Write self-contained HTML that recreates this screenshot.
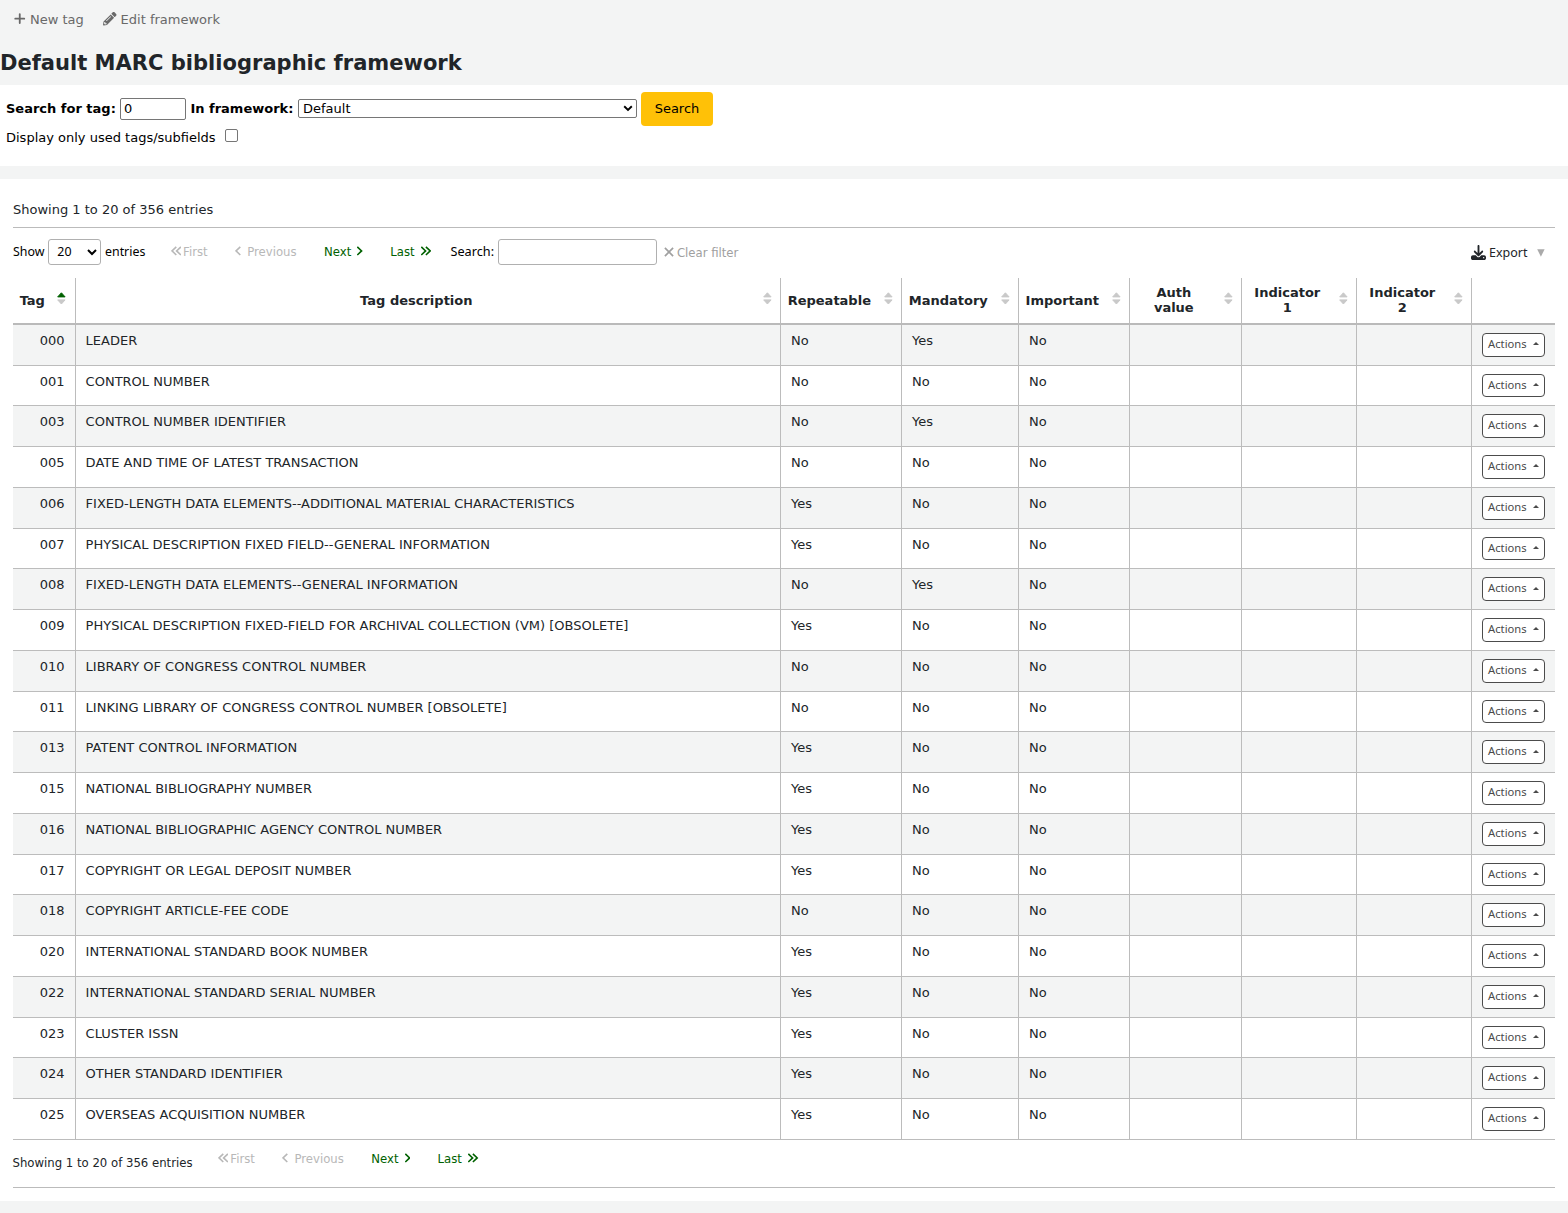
<!DOCTYPE html>
<html lang="en">
<head>
<meta charset="utf-8">
<title>Default MARC bibliographic framework</title>
<style>
*{box-sizing:border-box;}
html,body{margin:0;padding:0;}
body{width:1568px;height:1213px;overflow:hidden;background:#f3f4f4;color:#212529;font-family:"DejaVu Sans","Liberation Sans",sans-serif;font-size:13px;line-height:1.5;position:relative;}
a{text-decoration:none;color:inherit;}
.ns0{font-family:"Noto Sans","Noto Sans CJK SC","Liberation Sans",sans-serif;line-height:0;}
#toolbar{position:absolute;left:0;top:0;height:40px;width:100%;}
#toolbar .tb{position:absolute;top:10px;color:#696969;font-size:13px;line-height:20px;white-space:nowrap;}
#toolbar svg{position:absolute;}
h1{position:absolute;left:0;top:46px;margin:0;font-size:21.040px;font-weight:bold;line-height:34px;color:#212529;white-space:nowrap;}
#form{position:absolute;left:0;top:85px;width:1568px;height:81px;background:#fff;}
#form label{position:absolute;white-space:nowrap;font-size:13px;line-height:20px;color:#000;}
#form label.b{font-weight:bold;}
#tagbox{position:absolute;left:120px;top:13px;width:66px;height:22px;border:1px solid #767676;border-radius:2px;background:#fff;font-size:13px;line-height:20px;padding-left:3px;color:#000;}
#fwsel{position:absolute;left:298px;top:14px;width:339px;height:19px;border:1px solid #767676;border-radius:2px;background:#fff;font-size:13px;line-height:17px;padding-left:4px;color:#000;}
#fwsel svg{position:absolute;right:3px;top:5px;}
#searchbtn{position:absolute;left:641px;top:7px;width:72px;height:34px;background:#ffc107;border-radius:4px;font-size:13px;line-height:34px;text-align:center;color:#000;}
#cb{position:absolute;left:225px;top:44px;width:13px;height:13px;border:1px solid #767676;border-radius:2px;background:#fff;}
#section{position:absolute;left:0;top:179px;width:1568px;height:1022px;background:#fff;}
.abs{position:absolute;white-space:nowrap;}
.hr{position:absolute;left:13px;width:1542px;height:1px;background:#bbbbbb;}
#info-top{left:13px;top:21px;font-size:13px;line-height:20px;}
.pg{font-size:11.7px;line-height:18px;}
.pg.dis{color:#b8b8b8;}
.pg.on{color:#006100;}
.ctl{font-size:12.4px;line-height:18px;color:#000;}
#lensel{position:absolute;left:48px;top:60px;width:53px;height:26px;border:1px solid #b0b0b0;border-radius:3px;background:#fff;}
#lensel>span{position:absolute;left:8.300px;top:3px;font-size:12.400px;line-height:18px;color:#000;}
#lensel svg{position:absolute;right:3.500px;top:9px;}
#filter{position:absolute;left:498px;top:60px;width:159px;height:26px;border:1px solid #b0b0b0;border-radius:3px;background:#fff;}
table#tbl{position:absolute;left:13px;top:99px;width:1542px;border-collapse:separate;border-spacing:0;table-layout:fixed;}
#tbl th{height:46.750px;padding:0 29.700px 0 6.300px;border-right:1px solid #bcbcbc;border-bottom:2px solid #bababa;font-weight:bold;font-size:13px;line-height:15px;text-align:center;vertical-align:middle;position:relative;background:#fff;}
#tbl th.two{padding-bottom:0.750px;}
#tbl th:last-child,#tbl td:last-child{border-right:0;}
#tbl td{height:40.750px;padding:6.100px 10px 0 10px;border-right:1px solid #bcbcbc;border-bottom:1px solid #bcbcbc;font-size:13px;line-height:19.5px;vertical-align:top;white-space:nowrap;overflow:hidden;}
#tbl tr.odd td{background:#f3f4f4;}
#tbl tr.even td{background:#fff;}
#tbl td.tag{text-align:right;padding-right:10.500px;}
#tbl td.desc{padding-left:9.600px;}
#tbl td.act{padding:8px 0 0 10px;}
.btn-act{display:block;width:63px;height:23.750px;border:1px solid #4c4c4c;border-radius:4px;background:#fff;color:#4a4a4a;font-family:"Noto Sans","Noto Sans CJK SC","Liberation Sans",sans-serif;font-size:11.2px;line-height:19.400px;padding-left:5.100px;position:relative;}
.caret{display:inline-block;width:0;height:0;margin-left:3.500px;vertical-align:2.700px;border-left:3px solid transparent;border-right:3px solid transparent;border-bottom:3.500px solid #4a4a4a;}
.sort{position:absolute;right:8.300px;top:14.200px;width:9px;height:13px;}
</style>
</head>
<body>
<div id="toolbar">
  <svg style="left:14px;top:13px" width="12" height="12" viewBox="0 0 12 12"><path d="M5.750 1.100V10.100M1.250 5.650H10.250" stroke="#696969" stroke-width="1.800" stroke-linecap="round" fill="none"/></svg>
  <a class="tb" style="left:30px">New tag</a>
  <svg style="left:103px;top:12.400px" width="13.500" height="13.500" viewBox="0 0 512 512"><path fill="#696969" d="M497.900 142.100l-46.100 46.100c-4.700 4.700-12.300 4.700-17 0l-111-111c-4.700-4.700-4.700-12.300 0-17l46.100-46.100c18.700-18.700 49.100-18.700 67.900 0l60.100 60.100c18.800 18.700 18.800 49.100 0 67.900zM284.200 99.800L21.600 362.400.4 483.900c-2.900 16.400 11.400 30.600 27.800 27.800l121.500-21.300 262.600-262.600c4.700-4.700 4.700-12.300 0-17l-111-111c-4.800-4.700-12.400-4.700-17.100 0zM124.100 339.900c-5.500-5.500-5.500-14.300 0-19.800l154-154c5.500-5.500 14.300-5.500 19.800 0s5.500 14.300 0 19.800l-154 154c-5.500 5.500-14.300 5.500-19.800 0zM88 424h48v36.300l-64.500 11.300-31.100-31.100L51.700 376H88v48z"/></svg>
  <a class="tb" style="left:120.600px">Edit framework</a>
</div>
<h1>Default MARC bibliographic framework</h1>
<div id="form">
  <label class="b" style="left:6px;top:14px">Search for tag:</label>
  <div id="tagbox">0</div>
  <label class="b" style="left:190.400px;top:14px">In framework:</label>
  <div id="fwsel">Default<svg width="10" height="7" viewBox="0 0 10 7"><path d="M1.200 1.300L5 5L8.800 1.300" stroke="#000" stroke-width="1.900" fill="none"/></svg></div>
  <div id="searchbtn">Search</div>
  <label style="left:6px;top:43px">Display only used tags/subfields</label>
  <div id="cb"></div>
</div>
<div id="section">
  <div id="info-top" class="abs">Showing 1 to 20 of 356 entries</div>
  <div class="hr" style="top:48px"></div>
  <span class="abs ctl" style="left:13px;top:64px"><span class="ns0">Show</span></span>
  <div id="lensel"><span><span class="ns0">20</span></span><svg width="10" height="7" viewBox="0 0 10 7"><path d="M1 1L5 5L9 1" stroke="#000" stroke-width="2" fill="none"/></svg></div>
  <span class="abs ctl" style="left:105px;top:64px"><span class="ns0">entries</span></span>
  <svg class="abs" style="left:171.1px;top:67.4px" width="10.2" height="10" viewBox="0 0 10.2 10"><path d="M5.300 0.900L1 4.950L5.300 9 M9.900 0.900L5.600 4.950L9.900 9" stroke="#b8b8b8" stroke-width="1.600" fill="none"/></svg>
  <span class="abs pg dis" style="left:183.1px;top:64px">First</span>
  <svg class="abs" style="left:235.2px;top:67.4px" width="5.6" height="10" viewBox="0 0 5.6 10"><path d="M5.300 0.900L1 4.950L5.300 9" stroke="#b8b8b8" stroke-width="1.600" fill="none"/></svg>
  <span class="abs pg dis" style="left:247.2px;top:64px">Previous</span>
  <span class="abs pg on" style="left:324.1px;top:64px">Next</span>
  <svg class="abs" style="left:357.3px;top:67.4px" width="5.6" height="10" viewBox="0 0 5.6 10"><path d="M0.300 0.900L4.600 4.950L0.300 9" stroke="#006100" stroke-width="1.600" fill="none"/></svg>
  <span class="abs pg on" style="left:390.3px;top:64px">Last</span>
  <svg class="abs" style="left:421.2px;top:67.4px" width="10.2" height="10" viewBox="0 0 10.2 10"><path d="M0.300 0.900L4.600 4.950L0.300 9 M4.900 0.900L9.200 4.950L4.900 9" stroke="#006100" stroke-width="1.600" fill="none"/></svg>
  <span class="abs ctl" style="left:450.500px;top:64px;font-size:12.700px"><span class="ns0">Search:</span></span>
  <div id="filter"></div>
  <svg class="abs" style="left:663.500px;top:68.200px" width="10" height="10" viewBox="0 0 10 10"><path d="M0.900 0.900L9.100 9.100M9.100 0.900L0.900 9.100" stroke="#a0a0a0" stroke-width="1.700" fill="none"/></svg>
  <span class="abs pg dis" style="left:676.900px;top:65px;color:#a0a0a0">Clear filter</span>
  <svg class="abs" style="left:1471px;top:65.800px" width="15" height="15" viewBox="0 0 512 512"><path fill="#212529" d="M288 32c0-17.700-14.300-32-32-32s-32 14.300-32 32V274.700l-73.400-73.400c-12.500-12.500-32.800-12.500-45.300 0s-12.500 32.800 0 45.300l128 128c12.500 12.500 32.800 12.500 45.300 0l128-128c12.500-12.500 12.500-32.800 0-45.300s-32.800-12.500-45.300 0L288 274.700V32zM64 352c-35.300 0-64 28.700-64 64v32c0 35.300 28.700 64 64 64H448c35.300 0 64-28.700 64-64V416c0-35.300-28.700-64-64-64H346.500l-45.300 45.300c-25 25-65.500 25-90.500 0L165.500 352H64zm368 56a24 24 0 1 1 0 48 24 24 0 1 1 0-48z"/></svg>
  <span class="abs ctl" style="left:1489px;top:65px;color:#212529;font-size:12.500px"><span class="ns0">Export</span></span>
  <svg class="abs" style="left:1537.200px;top:70px" width="8" height="8" viewBox="0 0 8 8"><path d="M0.200 0.200H7.600L3.900 7.700Z" fill="#aaaaaa"/></svg>
  <table id="tbl">
  <colgroup><col style="width:63px"><col style="width:705px"><col style="width:121px"><col style="width:117px"><col style="width:111px"><col style="width:112px"><col style="width:115px"><col style="width:115px"><col style="width:83px"></colgroup>
  <thead><tr>
  <th>Tag<svg class="sort" style="right:9.100px" width="9" height="13" viewBox="0 0 9 13"><path d="M0.700 4.900L4.400 0.800L8.100 4.900Z" fill="#006100" stroke="#006100" stroke-width="1" stroke-linejoin="round"/><path d="M0.700 7.900H8.100L4.400 12Z" fill="#c9c9c9" stroke="#c9c9c9" stroke-width="1" stroke-linejoin="round"/></svg></th><th>Tag description<svg class="sort" width="9" height="13" viewBox="0 0 9 13"><path d="M0.700 4.900L4.400 0.800L8.100 4.900Z" fill="#c9c9c9" stroke="#c9c9c9" stroke-width="1" stroke-linejoin="round"/><path d="M0.700 7.900H8.100L4.400 12Z" fill="#c9c9c9" stroke="#c9c9c9" stroke-width="1" stroke-linejoin="round"/></svg></th><th>Repeatable<svg class="sort" width="9" height="13" viewBox="0 0 9 13"><path d="M0.700 4.900L4.400 0.800L8.100 4.900Z" fill="#c9c9c9" stroke="#c9c9c9" stroke-width="1" stroke-linejoin="round"/><path d="M0.700 7.900H8.100L4.400 12Z" fill="#c9c9c9" stroke="#c9c9c9" stroke-width="1" stroke-linejoin="round"/></svg></th><th>Mandatory<svg class="sort" width="9" height="13" viewBox="0 0 9 13"><path d="M0.700 4.900L4.400 0.800L8.100 4.900Z" fill="#c9c9c9" stroke="#c9c9c9" stroke-width="1" stroke-linejoin="round"/><path d="M0.700 7.900H8.100L4.400 12Z" fill="#c9c9c9" stroke="#c9c9c9" stroke-width="1" stroke-linejoin="round"/></svg></th><th>Important<svg class="sort" width="9" height="13" viewBox="0 0 9 13"><path d="M0.700 4.900L4.400 0.800L8.100 4.900Z" fill="#c9c9c9" stroke="#c9c9c9" stroke-width="1" stroke-linejoin="round"/><path d="M0.700 7.900H8.100L4.400 12Z" fill="#c9c9c9" stroke="#c9c9c9" stroke-width="1" stroke-linejoin="round"/></svg></th><th class="two">Auth value<svg class="sort" width="9" height="13" viewBox="0 0 9 13"><path d="M0.700 4.900L4.400 0.800L8.100 4.900Z" fill="#c9c9c9" stroke="#c9c9c9" stroke-width="1" stroke-linejoin="round"/><path d="M0.700 7.900H8.100L4.400 12Z" fill="#c9c9c9" stroke="#c9c9c9" stroke-width="1" stroke-linejoin="round"/></svg></th><th class="two">Indicator 1<svg class="sort" width="9" height="13" viewBox="0 0 9 13"><path d="M0.700 4.900L4.400 0.800L8.100 4.900Z" fill="#c9c9c9" stroke="#c9c9c9" stroke-width="1" stroke-linejoin="round"/><path d="M0.700 7.900H8.100L4.400 12Z" fill="#c9c9c9" stroke="#c9c9c9" stroke-width="1" stroke-linejoin="round"/></svg></th><th class="two">Indicator 2<svg class="sort" width="9" height="13" viewBox="0 0 9 13"><path d="M0.700 4.900L4.400 0.800L8.100 4.900Z" fill="#c9c9c9" stroke="#c9c9c9" stroke-width="1" stroke-linejoin="round"/><path d="M0.700 7.900H8.100L4.400 12Z" fill="#c9c9c9" stroke="#c9c9c9" stroke-width="1" stroke-linejoin="round"/></svg></th><th></th>
  </tr></thead>
  <tbody>
<tr class="odd"><td class="tag">000</td><td class="desc">LEADER</td><td>No</td><td>Yes</td><td>No</td><td></td><td></td><td></td><td class="act"><a class="btn-act">Actions <span class="caret"></span></a></td></tr>
<tr class="even"><td class="tag">001</td><td class="desc">CONTROL NUMBER</td><td>No</td><td>No</td><td>No</td><td></td><td></td><td></td><td class="act"><a class="btn-act">Actions <span class="caret"></span></a></td></tr>
<tr class="odd"><td class="tag">003</td><td class="desc">CONTROL NUMBER IDENTIFIER</td><td>No</td><td>Yes</td><td>No</td><td></td><td></td><td></td><td class="act"><a class="btn-act">Actions <span class="caret"></span></a></td></tr>
<tr class="even"><td class="tag">005</td><td class="desc">DATE AND TIME OF LATEST TRANSACTION</td><td>No</td><td>No</td><td>No</td><td></td><td></td><td></td><td class="act"><a class="btn-act">Actions <span class="caret"></span></a></td></tr>
<tr class="odd"><td class="tag">006</td><td class="desc">FIXED-LENGTH DATA ELEMENTS--ADDITIONAL MATERIAL CHARACTERISTICS</td><td>Yes</td><td>No</td><td>No</td><td></td><td></td><td></td><td class="act"><a class="btn-act">Actions <span class="caret"></span></a></td></tr>
<tr class="even"><td class="tag">007</td><td class="desc">PHYSICAL DESCRIPTION FIXED FIELD--GENERAL INFORMATION</td><td>Yes</td><td>No</td><td>No</td><td></td><td></td><td></td><td class="act"><a class="btn-act">Actions <span class="caret"></span></a></td></tr>
<tr class="odd"><td class="tag">008</td><td class="desc">FIXED-LENGTH DATA ELEMENTS--GENERAL INFORMATION</td><td>No</td><td>Yes</td><td>No</td><td></td><td></td><td></td><td class="act"><a class="btn-act">Actions <span class="caret"></span></a></td></tr>
<tr class="even"><td class="tag">009</td><td class="desc">PHYSICAL DESCRIPTION FIXED-FIELD FOR ARCHIVAL COLLECTION (VM) [OBSOLETE]</td><td>Yes</td><td>No</td><td>No</td><td></td><td></td><td></td><td class="act"><a class="btn-act">Actions <span class="caret"></span></a></td></tr>
<tr class="odd"><td class="tag">010</td><td class="desc">LIBRARY OF CONGRESS CONTROL NUMBER</td><td>No</td><td>No</td><td>No</td><td></td><td></td><td></td><td class="act"><a class="btn-act">Actions <span class="caret"></span></a></td></tr>
<tr class="even"><td class="tag">011</td><td class="desc">LINKING LIBRARY OF CONGRESS CONTROL NUMBER [OBSOLETE]</td><td>No</td><td>No</td><td>No</td><td></td><td></td><td></td><td class="act"><a class="btn-act">Actions <span class="caret"></span></a></td></tr>
<tr class="odd"><td class="tag">013</td><td class="desc">PATENT CONTROL INFORMATION</td><td>Yes</td><td>No</td><td>No</td><td></td><td></td><td></td><td class="act"><a class="btn-act">Actions <span class="caret"></span></a></td></tr>
<tr class="even"><td class="tag">015</td><td class="desc">NATIONAL BIBLIOGRAPHY NUMBER</td><td>Yes</td><td>No</td><td>No</td><td></td><td></td><td></td><td class="act"><a class="btn-act">Actions <span class="caret"></span></a></td></tr>
<tr class="odd"><td class="tag">016</td><td class="desc">NATIONAL BIBLIOGRAPHIC AGENCY CONTROL NUMBER</td><td>Yes</td><td>No</td><td>No</td><td></td><td></td><td></td><td class="act"><a class="btn-act">Actions <span class="caret"></span></a></td></tr>
<tr class="even"><td class="tag">017</td><td class="desc">COPYRIGHT OR LEGAL DEPOSIT NUMBER</td><td>Yes</td><td>No</td><td>No</td><td></td><td></td><td></td><td class="act"><a class="btn-act">Actions <span class="caret"></span></a></td></tr>
<tr class="odd"><td class="tag">018</td><td class="desc">COPYRIGHT ARTICLE-FEE CODE</td><td>No</td><td>No</td><td>No</td><td></td><td></td><td></td><td class="act"><a class="btn-act">Actions <span class="caret"></span></a></td></tr>
<tr class="even"><td class="tag">020</td><td class="desc">INTERNATIONAL STANDARD BOOK NUMBER</td><td>Yes</td><td>No</td><td>No</td><td></td><td></td><td></td><td class="act"><a class="btn-act">Actions <span class="caret"></span></a></td></tr>
<tr class="odd"><td class="tag">022</td><td class="desc">INTERNATIONAL STANDARD SERIAL NUMBER</td><td>Yes</td><td>No</td><td>No</td><td></td><td></td><td></td><td class="act"><a class="btn-act">Actions <span class="caret"></span></a></td></tr>
<tr class="even"><td class="tag">023</td><td class="desc">CLUSTER ISSN</td><td>Yes</td><td>No</td><td>No</td><td></td><td></td><td></td><td class="act"><a class="btn-act">Actions <span class="caret"></span></a></td></tr>
<tr class="odd"><td class="tag">024</td><td class="desc">OTHER STANDARD IDENTIFIER</td><td>Yes</td><td>No</td><td>No</td><td></td><td></td><td></td><td class="act"><a class="btn-act">Actions <span class="caret"></span></a></td></tr>
<tr class="even"><td class="tag">025</td><td class="desc">OVERSEAS ACQUISITION NUMBER</td><td>Yes</td><td>No</td><td>No</td><td></td><td></td><td></td><td class="act"><a class="btn-act">Actions <span class="caret"></span></a></td></tr>
  </tbody>
  </table>
  <div class="abs" style="left:12.500px;top:975px;font-size:11.700px;line-height:18px">Showing 1 to 20 of 356 entries</div>
  <svg class="abs" style="left:218.3px;top:974.4px" width="10.2" height="10" viewBox="0 0 10.2 10"><path d="M5.300 0.900L1 4.950L5.300 9 M9.900 0.900L5.600 4.950L9.900 9" stroke="#b8b8b8" stroke-width="1.600" fill="none"/></svg>
  <span class="abs pg dis" style="left:230.3px;top:971.0px">First</span>
  <svg class="abs" style="left:282.4px;top:974.4px" width="5.6" height="10" viewBox="0 0 5.6 10"><path d="M5.300 0.900L1 4.950L5.300 9" stroke="#b8b8b8" stroke-width="1.600" fill="none"/></svg>
  <span class="abs pg dis" style="left:294.4px;top:971.0px">Previous</span>
  <span class="abs pg on" style="left:371.3px;top:971.0px">Next</span>
  <svg class="abs" style="left:404.5px;top:974.4px" width="5.6" height="10" viewBox="0 0 5.6 10"><path d="M0.300 0.900L4.600 4.950L0.300 9" stroke="#006100" stroke-width="1.600" fill="none"/></svg>
  <span class="abs pg on" style="left:437.5px;top:971.0px">Last</span>
  <svg class="abs" style="left:468.4px;top:974.4px" width="10.2" height="10" viewBox="0 0 10.2 10"><path d="M0.300 0.900L4.600 4.950L0.300 9 M4.900 0.900L9.200 4.950L4.900 9" stroke="#006100" stroke-width="1.600" fill="none"/></svg>
  <div class="hr" style="top:1008px"></div>
</div>
</body>
</html>
